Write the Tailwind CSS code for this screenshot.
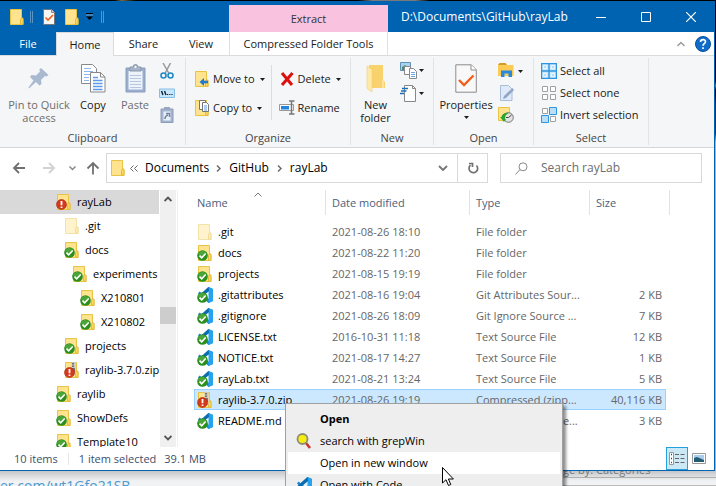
<!DOCTYPE html>
<html lang="en">
<head>
<meta charset="utf-8">
<title>rayLab</title>
<script src="https://cdn.jsdelivr.net/npm/@tailwindcss/browser@4"></script>
</head>
<body class="relative flex h-screen flex-col overflow-hidden bg-[#e9ebed] font-['Open_Sans','Noto_Sans',sans-serif] text-[11px] leading-4 text-[#1a1a1a]">

<svg class="hidden" aria-hidden="true">
  <symbol id="folder" viewBox="0 0 16 16"><path d="M1.5.5h11v10h1.500v5h-12.500z" fill="#ffe38e" stroke="#e9c344"/><path d="M11.500 15v-4.500l1-1.500h1.500v6.500z" fill="#ffd95e" stroke="#e2b93a"/></symbol>
  <symbol id="folder-pale" viewBox="0 0 16 16"><path d="M1.5.5h11v10h1.500v5h-12.500z" fill="#fff3cd" stroke="#f4e3a8"/><path d="M11.500 15v-4.500l1-1.500h1.500v6.500z" fill="#ffeeb5" stroke="#efdb98"/></symbol>
  <symbol id="ok" viewBox="0 0 11 11"><circle cx="5.500" cy="5.500" r="5.300" fill="#2b8f1e"/><path d="M1 4a5 5 0 0 1 8.500-1L4 7z" fill="#6bbb55" opacity=".5"/><path d="M2.500 5.600l2.200 2.200 4-4.300" fill="none" stroke="#fff" stroke-width="1.600"/></symbol>
  <symbol id="warn" viewBox="0 0 11 11"><circle cx="5.500" cy="5.500" r="5" fill="#d43a1c" stroke="#a82810" stroke-width=".6"/><path d="M5.500 2v4.200M5.500 7.400v1.500" stroke="#fff" stroke-width="1.800"/></symbol>
  <symbol id="vscode" viewBox="0 0 16 16"><path d="M11.500 0L16 2v12l-4.500 2L1 6.500l1.500-2L12 12V4L2.500 11.500 1 9.500z" fill="#1a86d0"/><path d="M11.500 0L16 2v12l-4.500 2z" fill="#25a3ee"/><path d="M1 9.500L11.500 0 12 4 2.500 11.500z" fill="#0b6cb0"/></symbol>
  <symbol id="zip" viewBox="0 0 16 16"><use href="#folder"/><path d="M7.500 0h4v13h-4z" fill="#c9c9c9"/><path d="M9 1v12" stroke="#555" stroke-width="1.500" stroke-dasharray="1.500 1"/><path d="M8 6h3v4h-3z" fill="#777"/></symbol>
  <symbol id="folder-ok" viewBox="0 0 16 16"><use href="#folder"/><use href="#ok" x="0" y="5" width="11" height="11"/></symbol>
  <symbol id="folder-warn" viewBox="0 0 16 16"><use href="#folder"/><use href="#warn" x="0" y="5" width="11" height="11"/></symbol>
  <symbol id="zip-warn" viewBox="0 0 16 16"><use href="#zip"/><use href="#warn" x="0" y="5" width="11" height="11"/></symbol>
  <symbol id="code-ok" viewBox="0 0 16 16"><use href="#vscode"/><use href="#ok" x="0" y="5" width="11" height="11"/></symbol>
  <symbol id="down" viewBox="0 0 5 3"><path d="M0 0h5L2.500 3z" fill="#1e1e1e"/></symbol>
  <symbol id="doc-check" viewBox="0 0 22 29"><path d="M.8.8h15.500l5 5v22.400H.8z" fill="#f8f8f8" stroke="#8c8c8c"/><path d="M16 .8V6h5" fill="#fff" stroke="#8c8c8c"/><path d="M4 16l5 5 9.500-9.500" fill="none" stroke="#f0601c" stroke-width="2.400"/></symbol>
</svg>

<div class="h-px shrink-0 bg-[linear-gradient(90deg,#000_0_16%,#887744_17%,#000_19%_50%,#888_52%_58%,#000_60%_78%,#000_84%)]"></div>

<div class="flex min-h-0 flex-1 bg-[linear-gradient(180deg,#000_0_17%,#a08050_18%,#000_19%_20%,#0a3c7c_22%_28%,#cfdae6_30%)] pr-px">
<main class="flex min-h-0 flex-1 flex-col border-r border-b border-[#0063b1] bg-white shadow-[0_2px_8px_rgba(0,0,0,0.4)]">

  <header class="flex h-[31px] shrink-0 bg-[#0063b1] text-white">
    <div class="flex w-[229px] items-center pl-[9px]">
      <svg class="size-4"><use href="#folder"/></svg>
      <span class="ml-[5px] h-3 w-[3px] border-x border-[#5b93c4]"></span>
      <button class="ml-[10px]" aria-label="Properties"><svg class="h-4 w-3" viewBox="0 0 12 16"><path d="M.5.500h8l3 3v12H.5z" fill="#f6f6f6" stroke="#777"/><path d="M8.500.500v3h3" fill="#ddd" stroke="#888"/><path d="M2.500 8.500l2.500 2.500 5-5" fill="none" stroke="#f0601c" stroke-width="1.600"/></svg></button>
      <button class="ml-[9px]" aria-label="New folder"><svg class="size-4"><use href="#folder"/></svg></button>
      <button class="ml-[6px]" aria-label="Customize toolbar"><svg class="h-2 w-[7px]" viewBox="0 0 7 8"><path d="M0 .5h7" stroke="#000"/><path d="M0 3.500h7L3.500 7z" fill="#000"/><path d="M0 2h7" stroke="#7aa8d2"/></svg></button>
      <span class="ml-2 h-3 w-[3px] border-x border-[#5b93c4]"></span>
    </div>
    <div class="mt-1 flex w-[159px] items-center justify-center bg-[#f9c3df] text-[#333]">Extract</div>
    <h1 class="min-w-0 flex-1 pl-[13px] text-[12px] leading-8 whitespace-nowrap">D:\Documents\GitHub\rayLab</h1>
    <button class="grid w-[45px] place-items-center" aria-label="Minimize"><svg class="size-[10px]" viewBox="0 0 10 10"><path d="M0 5.500h10" stroke="#fff"/></svg></button>
    <button class="grid w-[45px] place-items-center" aria-label="Maximize"><svg class="size-[10px]" viewBox="0 0 10 10"><path d="M.5.500h9v9h-9z" fill="none" stroke="#fff"/></svg></button>
    <button class="grid w-[46px] place-items-center" aria-label="Close"><svg class="size-[10px]" viewBox="0 0 10 10"><path d="M0 0l10 10M10 0L0 10" stroke="#fff" stroke-width="1.200"/></svg></button>
  </header>

  <nav class="flex h-6 shrink-0 border-b border-[#dadbdc]">
    <button class="w-14 bg-[#0063b1] text-white">File</button>
    <button class="-mb-px w-[58px] border border-b-0 border-[#dadbdc] bg-[#f5f6f7]">Home</button>
    <button class="w-[59px]">Share</button>
    <button class="w-[56px]">View</button>
    <button class="w-[159px] border-x border-[#e0e0e0] whitespace-nowrap">Compressed Folder Tools</button>
    <span class="flex-1"></span>
    <button class="mr-[10px]" aria-label="Collapse ribbon"><svg class="h-[6px] w-2" viewBox="0 0 8 6"><path d="M.5 5L4 1.500 7.500 5" fill="none" stroke="#999" stroke-width="1.400"/></svg></button>
    <button class="mr-[3px]" aria-label="Help"><svg class="size-4" viewBox="0 0 16 16"><circle cx="8" cy="8" r="7.500" fill="#0f6cc9" stroke="#0a4f9a"/><path d="M5.500 6c0-3.200 5-3.200 5-.3 0 2-2.500 1.800-2.500 4M8 11.200v1.800" fill="none" stroke="#fff" stroke-width="1.700"/></svg></button>
  </nav>

  <section class="flex h-[92px] shrink-0 border-b border-[#d4d6d8] bg-[#f5f6f7] py-[2px]" aria-label="Ribbon">
    <div class="flex w-[186px] flex-col border-r border-[#e2e3e4]">
      <div class="flex flex-1 pl-[5px]">
        <button class="flex w-[68px] flex-col items-center pt-[6px] leading-[13px] text-[#6d6d6d]">
          <svg class="mb-[5px] h-[29px] w-[22px]" viewBox="0 0 22 29"><path d="M13 4l7.500 7-2 1.500-1.500-.5-4 4 .5 4-2 1.500-3.500-3.500L1 24.500l-.5-1 5-7L2 13l1.500-2 4.500.5 4-4-.8-1.700z" fill="#a9b9d0"/></svg>
          <span>Pin to Quick<br>access</span></button>
        <button class="flex w-10 flex-col items-center pt-[6px] leading-[13px]">
          <svg class="mb-[5px] h-[29px] w-[25px]" viewBox="0 0 25 29"><path d="M.5.500h11l4 4v15H.5z" fill="#fff" stroke="#888"/><path d="M3 4.500h7M3 7.500h9M3 10.500h9M3 13.500h5M3 16.500h5" stroke="#8db6ec"/><path d="M9.500 8.500h10l4.500 4.500v15H9.500z" fill="#fff" stroke="#888"/><path d="M19.500 8.500V13H24" fill="none" stroke="#888"/><path d="M12 13.500h5M12 16.500h9.500M12 19.500h9.500M12 22.500h9.500M12 25.500h9.500" stroke="#5b9bea" stroke-width="1.300"/></svg>
          Copy</button>
        <button class="flex w-[44px] flex-col items-center pt-[6px] leading-[13px] text-[#6d6d6d]">
          <svg class="mb-[5px] h-[29px] w-[21px]" viewBox="0 0 21 29"><path d="M1 4h19v24H1z" fill="#99aed0" stroke="#8a9cbd"/><path d="M3.500 7h14v18.500h-14z" fill="#eef3fa"/><path d="M5 11.500h11M5 14.500h11M5 17.500h11M5 20.500h11M5 23.500h11" stroke="#b7c6de"/><path d="M5 7V3h3a2.500 2.500 0 0 1 5 0h3v4z" fill="#a8b4c6" stroke="#8997ae"/><circle cx="10.500" cy="3" r="1" fill="#fff"/></svg>
          Paste</button>
        <div class="flex flex-1 flex-col items-center gap-[6px] pt-[5px] pr-[8px]">
          <button aria-label="Cut"><svg class="size-4" viewBox="0 0 16 16"><path d="M4 0l6 10.500M11.500 0L6 10.500" stroke="#999" stroke-width="1.500"/><circle cx="4.500" cy="12.500" r="2.500" fill="none" stroke="#2089c8" stroke-width="1.600"/><circle cx="11.500" cy="12.500" r="2.500" fill="none" stroke="#2089c8" stroke-width="1.600"/></svg></button>
          <button aria-label="Copy path"><svg class="size-4" viewBox="0 0 16 16"><path d="M.5 4h15v8.500H.5z" fill="#c6e6fb" stroke="#86bfe6"/><path d="M2.500 6l1.500 4M5.500 6L7 10" stroke="#123" stroke-width="1.400"/><path d="M8 9.500h6" stroke="#123" stroke-width="1.200" stroke-dasharray="1.200 1"/></svg></button>
          <button aria-label="Paste shortcut"><svg class="size-4" viewBox="0 0 16 16"><path d="M2 2h12v13.500H2z" fill="#a5b5cf" stroke="#8b9bb8"/><path d="M4.500 4.500h7v9h-7z" fill="#e9eff8"/><path d="M5 0h6v3H5z" fill="#98a8c0"/><path d="M6 12c0-2.500 1-3.500 3-4M7 6.500h3.500V10" fill="none" stroke="#7384a5" stroke-width="1.500"/></svg></button>
        </div>
      </div>
      <div class="h-[14px] text-center leading-[14px] text-[#444]">Clipboard</div>
    </div>

    <div class="flex w-[165px] flex-col border-r border-[#e2e3e4]">
      <div class="flex flex-1 pl-2">
        <div class="flex flex-col gap-[13px] pt-[13px]">
          <button class="flex items-center"><svg class="mr-[3px] size-4" viewBox="0 0 16 16"><use href="#folder"/><path d="M14 11H9" stroke="#2379d0" stroke-width="2.600"/><path d="M5.500 11l4.500-4v8z" fill="#2379d0"/></svg>Move to<svg class="ml-[5px] h-[3px] w-[5px]"><use href="#down"/></svg></button>
          <button class="flex items-center"><svg class="mr-[3px] size-4" viewBox="0 0 16 16"><use href="#folder"/><path d="M5.500.500h6v9h-6z" fill="#fff" stroke="#777"/><path d="M8.500 2.500h4l2 2v7h-6z" fill="#fff" stroke="#777"/><path d="M10 6h3M10 8h3M10 10h3" stroke="#5b9bea"/></svg>Copy to<svg class="ml-[5px] h-[3px] w-[5px]"><use href="#down"/></svg></button>
        </div>
        <span class="mt-[7px] ml-[6px] h-[55px] w-px bg-[#dcdddf]"></span>
        <div class="ml-[7px] flex flex-col gap-[13px] pt-[13px]">
          <button class="flex items-center"><svg class="mr-[3px] size-4" viewBox="0 0 16 16"><path d="M3 2l10 12M13.500 2L3 14" stroke="#dd1010" stroke-width="3"/></svg>Delete<svg class="ml-[5px] h-[3px] w-[5px]"><use href="#down"/></svg></button>
          <button class="flex items-center"><svg class="mr-[3px] size-4" viewBox="0 0 16 16"><path d="M.5 4.500h14v6H.5z" fill="#fff" stroke="#999"/><path d="M2 6h8v3.500H2z" fill="#2684dd"/><path d="M10 1h2.500v13H10M15.500 1h-3M12.500 14h3" fill="none" stroke="#777" stroke-width="1.500"/></svg>Rename</button>
        </div>
      </div>
      <div class="h-[14px] text-center leading-[14px] text-[#444]">Organize</div>
    </div>

    <div class="flex w-[83px] flex-col border-r border-[#e2e3e4]">
      <div class="flex flex-1">
        <button class="flex w-[49px] flex-col items-center pt-[6px] leading-[13px]">
          <svg class="mb-[5px] h-[29px] w-5" viewBox="0 0 20 29"><path d="M3 1h14v15l2 2v6H3z" fill="#f8d26d"/><path d="M1 2l5 3.500V28l-5-3.500z" fill="#ffe9a8" stroke="#f2ce6e" stroke-width=".6"/><path d="M16 16h2v8h-2z" fill="#ffe199"/></svg>
          <span>New<br>folder</span></button>
        <div class="flex flex-col gap-[6px] pt-[4px]">
          <button class="flex items-center" aria-label="New item"><svg class="h-[17px] w-[17px]" viewBox="0 0 17 17"><path d="M.5.500h10v8H.5z" fill="#a9d3ee" stroke="#5d91b5"/><path d="M2 5l3-2 5 4v1H2z" fill="#4a8e70"/><path d="M4.500 4.500h6v8h-6z" fill="#fff" stroke="#888"/><path d="M9.500 6.500h4l3 3v7h-7z" fill="#fff" stroke="#888"/><path d="M11 10.500h4M11 12.500h4M11 14.500h4" stroke="#6ba5e8"/></svg><svg class="ml-[2px] h-[3px] w-[5px]"><use href="#down"/></svg></button>
          <button class="flex items-center" aria-label="Easy access"><svg class="h-[17px] w-[17px]" viewBox="0 0 17 17"><path d="M4.500.500h8l3 3v13h-11z" fill="#fff" stroke="#888"/><path d="M12.500.500v3h3" fill="none" stroke="#888"/><path d="M2 3.500h6M1 6h5.500M0 8.500h4" stroke="#1d6fb8" stroke-width="1.500"/></svg><svg class="ml-[2px] h-[3px] w-[5px]"><use href="#down"/></svg></button>
        </div>
      </div>
      <div class="h-[14px] text-center leading-[14px] text-[#444]">New</div>
    </div>

    <div class="flex w-[100px] flex-col border-r border-[#e2e3e4]">
      <div class="flex flex-1">
        <button class="flex w-[64px] flex-col items-center pt-[6px] leading-[13px]">
          <svg class="mb-[5px] h-[29px] w-[22px]"><use href="#doc-check"/></svg>
          Properties<svg class="mt-[5px] h-[3px] w-[5px]"><use href="#down"/></svg></button>
        <div class="flex flex-col gap-[6px] pt-[5px]">
          <button class="flex items-center" aria-label="Open"><svg class="size-4" viewBox="0 0 16 16"><path d="M0 2l1.500-2h6L9 2z" fill="#d59b20"/><path d="M0 2h15.500v11H0z" fill="#fbcb56"/><path d="M3 14V7.500h11V14h-3.500v-3.500h-4V14z" fill="#2889dc"/></svg><svg class="ml-1 h-[3px] w-[5px]"><use href="#down"/></svg></button>
          <button aria-label="Edit"><svg class="size-4" viewBox="0 0 16 16"><path d="M2.500.500h8l3.500 3.500v11.500H2.500z" fill="#dfe9f7" stroke="#a9bcd8"/><path d="M5 14l1-3 8.500-8 1.500 2-8 8z" fill="#90a6c8"/></svg></button>
          <button aria-label="History"><svg class="size-4" viewBox="0 0 16 16"><path d="M.5.500h11v13H.5z" fill="#ffe38e" stroke="#e9c344"/><circle cx="10.500" cy="10.500" r="4.800" fill="#e2e2e2" stroke="#777"/><path d="M10.500 10.500l3-2.500M10.500 10.500H8" stroke="#444"/><path d="M2 10l4 5 2-3H7c0-3 1-5 4-6-4-1-7 1-7.500 4z" fill="#2ea62c"/></svg></button>
        </div>
      </div>
      <div class="h-[14px] text-center leading-[14px] text-[#444]">Open</div>
    </div>

    <div class="flex w-[115px] flex-col border-r border-[#e2e3e4]">
      <div class="flex flex-1 flex-col gap-[6px] pt-[5px] pl-[7px]">
        <button class="flex items-center whitespace-nowrap"><svg class="mr-[3px] size-4" viewBox="0 0 16 16"><path d="M.5.500h15v15H.5zM8 0v16M0 8h16" fill="#cce8fb" stroke="#2f95e0" stroke-width="1.400"/><path d="M2.500 2.500h3v3h-3zM10.500 2.500h3v3h-3zM2.500 10.500h3v3h-3zM10.500 10.500h3v3h-3z" fill="#b3dcf8" stroke="#eaf6ff"/></svg>Select all</button>
        <button class="flex items-center whitespace-nowrap"><svg class="mr-[3px] size-4" viewBox="0 0 16 16"><path d="M1.500 1.500h5v5h-5zM9.500 1.500h5v5h-5zM1.500 9.500h5v5h-5zM9.500 9.500h5v5h-5z" fill="#fff" stroke="#a0a0a0"/></svg>Select none</button>
        <button class="flex items-center whitespace-nowrap"><svg class="mr-[3px] size-4" viewBox="0 0 16 16"><path d="M1.500 1.500h5v5h-5zM9.500 9.500h5v5h-5z" fill="#fff" stroke="#a0a0a0"/><path d="M8.500.500h7v7h-7zM.5 8.500h7v7h-7z" fill="#b9def8" stroke="#2f95e0"/></svg>Invert selection</button>
      </div>
      <div class="h-[14px] text-center leading-[14px] text-[#444]">Select</div>
    </div>
  </section>

  <section class="flex h-[42px] shrink-0 items-center pr-3 pb-[2px]" aria-label="Navigation">
    <div class="flex w-[106px] items-center pl-3">
      <button aria-label="Back"><svg class="h-3 w-[14px]" viewBox="0 0 14 12"><path d="M13 6H2M7 1L2 6l5 5" fill="none" stroke="#707070" stroke-width="1.800"/></svg></button>
      <button class="ml-4" aria-label="Forward"><svg class="h-3 w-[14px]" viewBox="0 0 14 12"><path d="M1 6h11M7 1l5 5-5 5" fill="none" stroke="#d2d2d2" stroke-width="1.800"/></svg></button>
      <button class="ml-[13px]" aria-label="Recent locations"><svg class="h-[5px] w-[7px]" viewBox="0 0 7 5"><path d="M.5.500l3 3 3-3" fill="none" stroke="#888" stroke-width="1.500"/></svg></button>
      <button class="ml-[10px]" aria-label="Up"><svg class="size-[14px]" viewBox="0 0 14 14"><path d="M7 13.500V2M1.500 7.500L7 2l5.500 5.500" fill="none" stroke="#707070" stroke-width="1.800"/></svg></button>
    </div>
    <div class="flex h-[30px] flex-1 items-center border border-[#d9d9d9] text-[12px] text-black">
      <svg class="ml-[3px] size-4"><use href="#folder"/></svg>
      <button class="ml-1" aria-label="Parent folders"><svg class="h-[7px] w-2" viewBox="0 0 8 7"><path d="M3.500.500l-3 3 3 3M7.500.500l-3 3 3 3" fill="none" stroke="#666"/></svg></button>
      <a href="#" class="ml-[7px]">Documents</a>
      <svg class="ml-[7px] h-[7px] w-[5px]" viewBox="0 0 5 7"><path d="M1 .5l3 3-3 3" fill="none" stroke="#666" stroke-width="1.400"/></svg>
      <a href="#" class="ml-2">GitHub</a>
      <svg class="ml-2 h-[7px] w-[5px]" viewBox="0 0 5 7"><path d="M1 .5l3 3-3 3" fill="none" stroke="#666" stroke-width="1.400"/></svg>
      <a href="#" class="ml-2">rayLab</a>
      <span class="flex-1"></span>
      <button class="mr-[9px]" aria-label="Previous locations"><svg class="h-[6px] w-[10px]" viewBox="0 0 10 6"><path d="M1 1l4 4 4-4" fill="none" stroke="#777" stroke-width="1.900"/></svg></button>
      <button class="grid h-full w-[30px] place-items-center border-l border-[#d9d9d9]" aria-label="Refresh"><svg class="size-3" viewBox="0 0 12 12"><path d="M9.500 3.500a4.300 4.300 0 1 1-6-.3M2 1.500h3.500V5" fill="none" stroke="#707070" stroke-width="1.700"/></svg></button>
    </div>
    <label class="ml-3 flex h-[30px] w-[202px] items-center border border-[#d9d9d9] pl-[14px]">
      <svg class="size-[13px]" viewBox="0 0 13 13"><circle cx="8" cy="4.800" r="4" fill="none" stroke="#888"/><path d="M5 7.500L.5 12.500" stroke="#888"/></svg>
      <input type="search" aria-label="Search rayLab" placeholder="Search rayLab" class="ml-[13px] w-0 flex-1 bg-transparent text-[12px] outline-none placeholder:text-[#6d6d6d]">
    </label>
  </section>

  <div class="flex min-h-0 flex-1">
    <aside class="flex w-[178px] shrink-0 overflow-hidden border-r border-[#f0f0f0]">
      <ul class="w-[159px] overflow-hidden whitespace-nowrap text-black">
        <li class="flex h-6 items-center gap-[5px] bg-[#d9d9d9] pl-14"><svg class="size-4 shrink-0"><use href="#folder-warn"/></svg>rayLab</li>
        <li class="flex h-6 items-center gap-[5px] pl-16"><svg class="size-4 shrink-0"><use href="#folder-pale"/></svg>.git</li>
        <li class="flex h-6 items-center gap-[5px] pl-16"><svg class="size-4 shrink-0"><use href="#folder-ok"/></svg>docs</li>
        <li class="flex h-6 items-center gap-[5px] pl-18"><svg class="size-4 shrink-0"><use href="#folder-ok"/></svg>experiments</li>
        <li class="flex h-6 items-center gap-[5px] pl-20"><svg class="size-4 shrink-0"><use href="#folder-ok"/></svg>X210801</li>
        <li class="flex h-6 items-center gap-[5px] pl-20"><svg class="size-4 shrink-0"><use href="#folder-ok"/></svg>X210802</li>
        <li class="flex h-6 items-center gap-[5px] pl-16"><svg class="size-4 shrink-0"><use href="#folder-ok"/></svg>projects</li>
        <li class="flex h-6 items-center gap-[5px] pl-16"><svg class="size-4 shrink-0"><use href="#zip-warn"/></svg>raylib-3.7.0.zip</li>
        <li class="flex h-6 items-center gap-[5px] pl-14"><svg class="size-4 shrink-0"><use href="#folder-ok"/></svg>raylib</li>
        <li class="flex h-6 items-center gap-[5px] pl-14"><svg class="size-4 shrink-0"><use href="#folder-ok"/></svg>ShowDefs</li>
        <li class="flex h-6 items-center gap-[5px] pl-14"><svg class="size-4 shrink-0"><use href="#folder-ok"/></svg>Template10</li>
      </ul>
      <div class="ml-px flex w-4 flex-col items-center bg-[#f0f0f0] py-[6px]">
        <svg class="h-[6px] w-2" viewBox="0 0 8 6"><path d="M.5 5L4 1.500 7.500 5" fill="none" stroke="#555" stroke-width="1.900"/></svg>
        <span class="mt-[105px] h-[17px] w-full bg-[#cdcdcd]"></span>
        <svg class="mt-auto h-[6px] w-2" viewBox="0 0 8 6"><path d="M.5 1L4 4.500 7.500 1" fill="none" stroke="#555" stroke-width="1.900"/></svg>
      </div>
    </aside>

    <div class="min-w-0 flex-1 overflow-hidden pl-4">
      <table class="w-[476px] table-fixed border-separate border-spacing-0 whitespace-nowrap text-[#666]">
        <colgroup><col class="w-[132px]"><col class="w-[144px]"><col class="w-[120px]"><col class="w-[76px]"><col class="w-1"></colgroup>
        <thead class="text-left text-[#4c607a]">
          <tr class="h-[25px]">
            <th class="relative border-r border-[#e2e2e2] pl-[3px] font-normal">Name<svg class="absolute top-[2px] left-[60px] h-[5px] w-2" viewBox="0 0 8 5"><path d="M.5 4.500L4 1l3.500 3.500" fill="none" stroke="#777"/></svg></th>
            <th class="border-r border-[#e2e2e2] pl-[6px] font-normal">Date modified</th>
            <th class="border-r border-[#e2e2e2] pl-[6px] font-normal">Type</th>
            <th class="pl-[6px] font-normal">Size</th>
            <td class="border-r border-[#e2e2e2]"></td>
          </tr>
        </thead>
        <tbody>
          <tr class="h-[6px]"><td colspan="5"></td></tr>
          <tr class="h-[21px]"><td class="pl-[3px]"><div class="flex items-center gap-[5px] text-black"><svg class="size-4 shrink-0"><use href="#folder-pale"/></svg>.git</div></td><td class="pl-[6px]">2021-08-26 18:10</td><td class="pl-[6px]">File folder</td><td></td></tr>
          <tr class="h-[21px]"><td class="pl-[3px]"><div class="flex items-center gap-[5px] text-black"><svg class="size-4 shrink-0"><use href="#folder-ok"/></svg>docs</div></td><td class="pl-[6px]">2021-08-22 11:20</td><td class="pl-[6px]">File folder</td><td></td></tr>
          <tr class="h-[21px]"><td class="pl-[3px]"><div class="flex items-center gap-[5px] text-black"><svg class="size-4 shrink-0"><use href="#folder-ok"/></svg>projects</div></td><td class="pl-[6px]">2021-08-15 19:19</td><td class="pl-[6px]">File folder</td><td></td></tr>
          <tr class="h-[21px]"><td class="pl-[3px]"><div class="flex items-center gap-[5px] text-black"><svg class="size-4 shrink-0"><use href="#code-ok"/></svg>.gitattributes</div></td><td class="pl-[6px]">2021-08-16 19:04</td><td class="pl-[6px]">Git Attributes Sour...</td><td class="pr-1 text-right">2 KB</td></tr>
          <tr class="h-[21px]"><td class="pl-[3px]"><div class="flex items-center gap-[5px] text-black"><svg class="size-4 shrink-0"><use href="#code-ok"/></svg>.gitignore</div></td><td class="pl-[6px]">2021-08-26 18:09</td><td class="pl-[6px]">Git Ignore Source ...</td><td class="pr-1 text-right">7 KB</td></tr>
          <tr class="h-[21px]"><td class="pl-[3px]"><div class="flex items-center gap-[5px] text-black"><svg class="size-4 shrink-0"><use href="#code-ok"/></svg>LICENSE.txt</div></td><td class="pl-[6px]">2016-10-31 11:18</td><td class="pl-[6px]">Text Source File</td><td class="pr-1 text-right">12 KB</td></tr>
          <tr class="h-[21px]"><td class="pl-[3px]"><div class="flex items-center gap-[5px] text-black"><svg class="size-4 shrink-0"><use href="#code-ok"/></svg>NOTICE.txt</div></td><td class="pl-[6px]">2021-08-17 14:27</td><td class="pl-[6px]">Text Source File</td><td class="pr-1 text-right">1 KB</td></tr>
          <tr class="h-[21px]"><td class="pl-[3px]"><div class="flex items-center gap-[5px] text-black"><svg class="size-4 shrink-0"><use href="#code-ok"/></svg>rayLab.txt</div></td><td class="pl-[6px]">2021-08-21 13:24</td><td class="pl-[6px]">Text Source File</td><td class="pr-1 text-right">5 KB</td></tr>
          <tr class="h-[21px]"><td class="border border-r-0 border-[#99d1ff] bg-[#cce8ff] pl-[2px]"><div class="flex items-center gap-[5px] text-black"><svg class="size-4 shrink-0"><use href="#zip-warn"/></svg>raylib-3.7.0.zip</div></td><td class="border-y border-[#99d1ff] bg-[#cce8ff] pl-[6px]">2021-08-26 19:19</td><td class="border-y border-[#99d1ff] bg-[#cce8ff] pl-[6px]">Compressed (zipp...</td><td class="border border-l-0 border-[#99d1ff] bg-[#cce8ff] pr-[3px] text-right">40,116 KB</td></tr>
          <tr class="h-[21px]"><td class="pl-[3px]"><div class="flex items-center gap-[5px] text-black"><svg class="size-4 shrink-0"><use href="#code-ok"/></svg>README.md</div></td><td class="pl-[6px]">2021-08-26 18:09</td><td class="pl-[6px]">Markdown Source...</td><td class="pr-1 text-right">3 KB</td></tr>
        </tbody>
      </table>
    </div>
  </div>

  <footer class="flex h-[23px] shrink-0 items-center pl-[14px] text-[#3c4f6b]">
    <span>10 items</span>
    <span class="mr-[10px] ml-[10px] h-3 w-px bg-[#e6e6e6]"></span>
    <span>1 item selected</span>
    <span class="ml-2 flex-1">39.1 MB</span>
    <button class="grid h-[23px] w-[22px] place-items-center border border-[#26a0da] bg-[#cbe8f6]" aria-label="Details view"><svg class="h-[13px] w-4" viewBox="0 0 16 13"><path d="M.5.500h4v12h-4z" fill="#fff" stroke="#999"/><path d="M2 2.500h1M2 6.500h1" stroke="#245" stroke-width="1.500"/><path d="M2 10.500h1" stroke="#e02020" stroke-width="1.500"/><path d="M6 2.500h10M6 6.500h10M6 10.500h10" stroke="#666" stroke-dasharray="4 1.500"/></svg></button>
    <button class="mr-2 ml-1" aria-label="Thumbnail view"><svg class="h-[11px] w-[14px]" viewBox="0 0 14 11"><path d="M.5.500h13v10H.5z" fill="#fff" stroke="#999"/><path d="M2 2h10v7H2z" fill="#a8cdee"/><path d="M2 5l3-1 7 3v2H2z" fill="#245d73"/></svg></button>
  </footer>
</main>
</div>

<div class="flex h-[15px] shrink-0 justify-between overflow-hidden bg-[linear-gradient(180deg,#c4c6c9,#f1f2f3_10px)]">
  <a href="#" class="pt-[5px] text-[14px] leading-5 text-[#4b9ad0]">er.com/wt1Gfo21SB</a>
  <div class="w-[153px] overflow-hidden border-b border-[#bbb]"><p class="-mt-[9px] h-4 border-b border-[#b0b0b0] leading-4 text-[#777]">ge by: Categories</p></div>
</div>

<menu class="absolute top-[403px] left-[285px] w-[278px] border border-[#a0a0a0] bg-[#eeeeee] px-[2px] py-1 text-black shadow-[3px_3px_3px_rgba(0,0,0,0.45)]">
  <li><button class="flex h-[22px] w-full items-center pl-8 font-bold">Open</button></li>
  <li><button class="flex h-[22px] w-full items-center pl-2"><svg class="mr-2 size-4" viewBox="0 0 16 16"><path d="M10 10l4 5" stroke="#cc3333" stroke-width="2.600"/><circle cx="6.500" cy="6" r="5" fill="#f5ee10" stroke="#8d8d72" stroke-width="1.800"/></svg>search with grepWin</button></li>
  <li><button class="flex h-[22px] w-full items-center bg-white pl-8">Open in new window</button></li>
  <li><button class="flex h-[22px] w-full items-center pl-2"><svg class="mr-2 size-4"><use href="#vscode"/></svg>Open with Code</button></li>
</menu>
<svg class="absolute top-[467px] left-[442px] h-[19px] w-3" viewBox="0 0 12 19"><path d="M.5.500v15.500l3.500-3.300 2.500 5.800 2.300-1-2.400-5.500h5z" fill="#fff" stroke="#000"/></svg>

</body>
</html>
